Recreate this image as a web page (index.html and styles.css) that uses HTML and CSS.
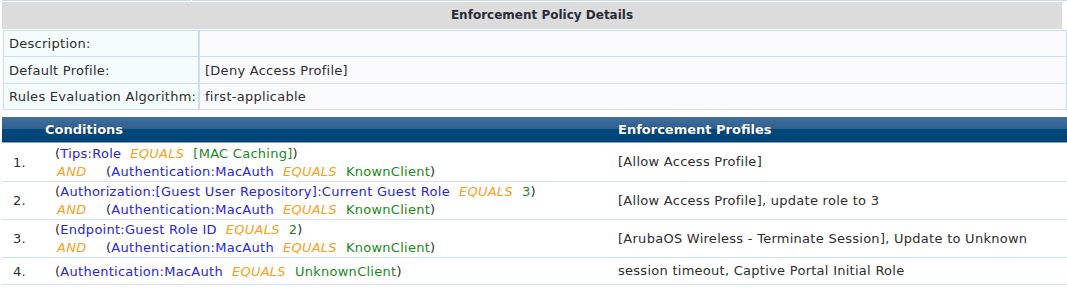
FILE: index.html
```html
<!DOCTYPE html>
<html>
<head>
<meta charset="utf-8">
<link rel="stylesheet" href="styles.css">
</head>
<body>
<div class="page">
  <div class="topline"><span class="seg seg-a"></span><span class="seg seg-b"></span></div>
  <div class="panel-title">Enforcement Policy Details</div>
  <table class="details">
    <tr><td class="label">Description:</td><td class="value"></td></tr>
    <tr class="mid"><td class="label">Default Profile:</td><td class="value">[Deny Access Profile]</td></tr>
    <tr><td class="label">Rules Evaluation Algorithm:</td><td class="value">first-applicable</td></tr>
  </table>
  <table class="rules">
    <colgroup><col class="c-num"><col class="c-cond"><col class="c-prof"></colgroup>
    <thead>
      <tr><th colspan="2" class="h-cond">Conditions</th><th class="h-prof">Enforcement Profiles</th></tr>
    </thead>
    <tbody>
      <tr class="first">
        <td class="num">1.</td>
        <td class="cond">
          <div class="line"><span class="p">(</span><span class="attr">Tips:Role</span><span class="op">EQUALS</span><span class="val">[MAC Caching]</span><span class="p">)</span></div>
          <div class="line"><span class="and">AND</span><span class="p">(</span><span class="attr">Authentication:MacAuth</span><span class="op">EQUALS</span><span class="val">KnownClient</span><span class="p">)</span></div>
        </td>
        <td class="prof">[Allow Access Profile]</td>
      </tr>
      <tr>
        <td class="num">2.</td>
        <td class="cond">
          <div class="line"><span class="p">(</span><span class="attr">Authorization:[Guest User Repository]:Current Guest Role</span><span class="op">EQUALS</span><span class="val">3</span><span class="p">)</span></div>
          <div class="line"><span class="and">AND</span><span class="p">(</span><span class="attr">Authentication:MacAuth</span><span class="op">EQUALS</span><span class="val">KnownClient</span><span class="p">)</span></div>
        </td>
        <td class="prof">[Allow Access Profile], update role to 3</td>
      </tr>
      <tr>
        <td class="num">3.</td>
        <td class="cond">
          <div class="line"><span class="p">(</span><span class="attr">Endpoint:Guest Role ID</span><span class="op">EQUALS</span><span class="val">2</span><span class="p">)</span></div>
          <div class="line"><span class="and">AND</span><span class="p">(</span><span class="attr">Authentication:MacAuth</span><span class="op">EQUALS</span><span class="val">KnownClient</span><span class="p">)</span></div>
        </td>
        <td class="prof">[ArubaOS Wireless - Terminate Session], Update to Unknown</td>
      </tr>
      <tr>
        <td class="num">4.</td>
        <td class="cond">
          <div class="line"><span class="p">(</span><span class="attr">Authentication:MacAuth</span><span class="op">EQUALS</span><span class="val">UnknownClient</span><span class="p">)</span></div>
        </td>
        <td class="prof">session timeout, Captive Portal Initial Role</td>
      </tr>
    </tbody>
  </table>
</div>
</body>
</html>
```
FILE: styles.css
```css
html, body {
  margin: 0;
  padding: 0;
  background: #ffffff;
}
body {
  font-family: "DejaVu Sans", Verdana, sans-serif;
  font-size: 13px;
  letter-spacing: 0.27px;
  color: #2e2e2e;
}
.page {
  width: 1067px;
}
.topline {
  display: flex;
  gap: 1px;
  height: 1px;
  padding-left: 2px;
}
.seg {
  display: block;
  height: 1px;
  background: #c6dcf5;
}
.seg-a { width: 189px; }
.seg-b { flex: 1; }

.panel-title {
  margin: 1px 5px 0 2px;
  padding-left: 20px;
  height: 27px;
  line-height: 27px;
  background: #dcdcdc;
  text-align: center;
  font-weight: bold;
  font-size: 12px;
  letter-spacing: 0;
  color: #2a2a36;
}

.details {
  margin: 1px 0 0 3px;
  width: 1064px;
  border-collapse: collapse;
}
.details td {
  border: 1px solid #c9ddf4;
  height: 25px;
  padding: 0 0 0 5px;
  vertical-align: middle;
}
.details tr.mid td {
  height: 26px;
}
.details .label {
  width: 189px;
  background: #f4fcfc;
  border-right-width: 2px;
}
.details .value {
  background: #fbfbfe;
}

.rules {
  margin: 7px 0 0 2px;
  width: 1065px;
  border-collapse: collapse;
  table-layout: fixed;
}
.c-num { width: 50px; }
.c-cond { width: 561px; }
.c-prof { width: 454px; }

.rules th {
  height: 25px;
  padding: 0;
  text-align: left;
  color: #ffffff;
  font-weight: bold;
  letter-spacing: 0;
  background: linear-gradient(#416f9d 0%, #2e5f8f 50%, #02477a 50%, #00457a 100%);
  border-bottom: 1px solid #9a9a9a;
  text-shadow: 0 0 1px #0b2a48;
}
.rules .h-cond { padding-left: 43px; }
.rules .h-prof { padding-left: 5px; }

.rules td {
  border-bottom: 1px solid #cfe0f3;
  vertical-align: middle;
  padding: 0;
}
.rules .num {
  padding-left: 11px;
}
.rules .cond {
  padding: 1px 0 0 3px;
}
.rules tr.first .cond {
  padding-top: 2px;
}
.rules .prof {
  padding: 4px 0 4px 5px;
  line-height: 18px;
}
.line {
  height: 18px;
  line-height: 18px;
  white-space: nowrap;
}
.p { color: #2e2e2e; }
.attr { color: #2626dc; }
.op {
  color: #f8a01c;
  font-style: italic;
  margin: 0 9px;
}
.val { color: #1a8a1a; }
.and {
  display: inline-block;
  width: 49px;
  margin-left: 2px;
  color: #f8a01c;
  font-style: italic;
}
```
